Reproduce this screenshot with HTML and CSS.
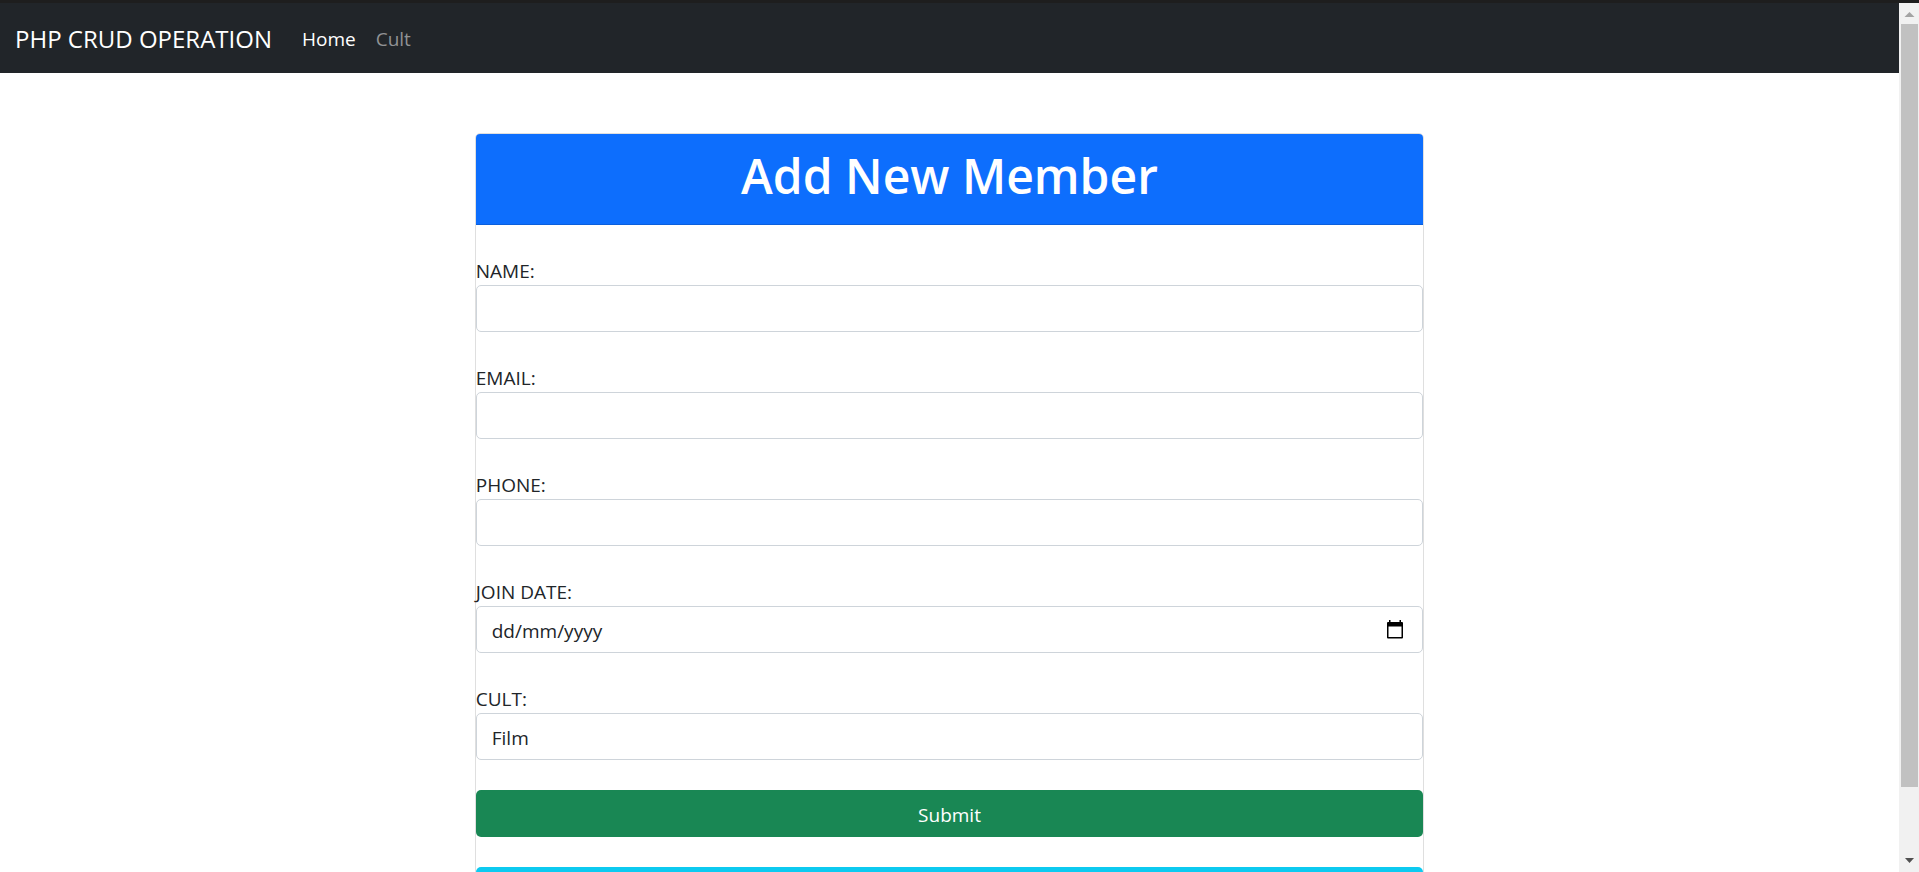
FILE: index.html
```html
<!DOCTYPE html>
<html lang="en">
<head>
<meta charset="utf-8">
<title>PHP CRUD OPERATION</title>
<link rel="stylesheet" href="styles.css">
</head>
<body>
<div class="window">
  <div class="page">
    <nav class="navbar">
      <a class="navbar-brand" href="#">PHP CRUD OPERATION</a>
      <a class="nav-link active" href="#">Home</a>
      <a class="nav-link" href="#">Cult</a>
    </nav>
    <main class="content">
      <form class="card">
        <header class="card-header"><h1 class="title">Add New Member</h1></header>
        <div class="field">
          <label class="label" for="name">NAME:</label>
          <input class="control" id="name" type="text">
        </div>
        <div class="field">
          <label class="label" for="email">EMAIL:</label>
          <input class="control" id="email" type="email">
        </div>
        <div class="field">
          <label class="label" for="phone">PHONE:</label>
          <input class="control" id="phone" type="tel">
        </div>
        <div class="field">
          <label class="label" for="date">JOIN DATE:</label>
          <div class="date">
            <input class="control" id="date" type="text" placeholder="dd/mm/yyyy">
            <button class="date-button" type="button" aria-label="Pick a date">
              <svg class="date-icon" viewBox="0 0 20 20" aria-hidden="true"><path fill-rule="evenodd" d="M4 0h1.500v2h9V0H16v2h1a1 1 0 0 1 1 1v14.500a1 1 0 0 1-1 1H3a1 1 0 0 1-1-1V3a1 1 0 0 1 1-1h1zM3.500 6.500v10.500h13V6.500z"/></svg>
            </button>
          </div>
        </div>
        <div class="field">
          <label class="label" for="cult">CULT:</label>
          <select class="control" id="cult"><option>Film</option></select>
        </div>
        <button class="btn btn-success" type="submit">Submit</button>
        <button class="btn btn-info" type="button" aria-label="Cancel"></button>
      </form>
    </main>
  </div>
  <div class="scrollbar" aria-hidden="true">
    <svg class="arrow arrow-up" viewBox="0 0 20 21"><path d="M10.500 9l5 5h-10z"/></svg>
    <div class="track"><div class="thumb"></div></div>
    <svg class="arrow arrow-down" viewBox="0 0 20 21"><path d="M6 7h9l-4.500 5z"/></svg>
  </div>
</div>
</body>
</html>
```
FILE: styles.css
```css
* { box-sizing: border-box; }
body {
  margin: 0;
  background: #fff;
  color: #212529;
  font: 400 19px/30px "Segoe UI", "Open Sans", "Noto Sans", sans-serif;
}
.window {
  display: flex;
  height: 100vh;
  overflow: hidden;
  border-top: 3px solid #1e1e1e;
}
.page { flex: 1; overflow: hidden; }
.navbar {
  display: flex;
  align-items: center;
  height: 70px;
  padding: 2px 15px 0;
  background: #212529;
}
.navbar-brand {
  margin-right: 20px;
  color: #fff;
  font-size: 24px;
  text-decoration: none;
}
.nav-link {
  padding: 0 10px;
  color: #909294;
  text-decoration: none;
}
.nav-link.active { color: #fff; }
.content { padding-top: 60px; }
.card {
  display: flex;
  flex-direction: column;
  gap: 30px;
  width: 50%;
  margin: 0 auto;
  border: 1px solid #dfdfdf;
  border-radius: 5px;
}
.card-header {
  padding: 12px 20px 18px;
  border-bottom: 1px solid #0b5fdc;
  border-radius: 4px 4px 0 0;
  background: #0d6efd;
  color: #fff;
  text-align: center;
}
.title {
  margin: 0;
  font-size: 48px;
  font-weight: 600;
  line-height: 60px;
}
.field { display: flex; flex-direction: column; }
.label {
  padding-top: 2px;
  line-height: 28px;
}
.control {
  display: block;
  width: 100%;
  height: 47px;
  padding: 2px 15px 0;
  border: 1px solid #ced4da;
  border-radius: 5px;
  background: #fff;
  color: #212529;
  font: inherit;
  appearance: none;
}
.control::placeholder { color: #212529; opacity: 1; }
.date { position: relative; }
.date-button {
  position: absolute;
  top: 0;
  right: 18px;
  display: flex;
  align-items: center;
  height: 100%;
  padding: 0;
  border: 0;
  background: none;
}
.date-icon { width: 20px; height: 20px; }
.btn {
  height: 47px;
  padding: 2px 0 0;
  border: 0;
  border-radius: 5px;
  color: #fff;
  font: inherit;
}
.btn-success { background: #198754; }
.btn-info { background: #0dcaf0; }
.scrollbar {
  display: flex;
  flex-direction: column;
  width: 20px;
  background: #f1f1f1;
}
.arrow { flex: none; width: 20px; height: 21px; }
.arrow-up { fill: #a3a3a3; }
.arrow-down { fill: #505050; }
.track {
  display: grid;
  grid-template-rows: 12fr 1fr;
  flex: 1;
  padding: 0 1px 0 2px;
}
.thumb { background: #c1c1c1; }
```
